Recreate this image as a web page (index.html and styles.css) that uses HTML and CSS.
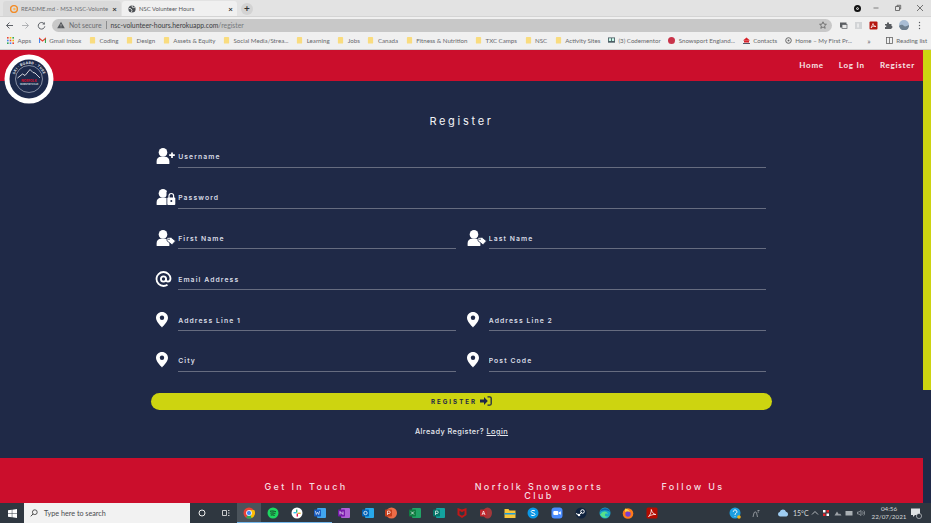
FILE: index.html
```html
<!DOCTYPE html>
<html lang="en">
<head>
<meta charset="utf-8">
<title>NSC Volunteer Hours</title>
<link rel="stylesheet" href="styles.css">
</head>
<body>
<svg class="defs" width="0" height="0">
  <defs>
    <g id="folder"><rect x="0" y="0" width="6" height="7.5" rx="1" fill="#f9dc7f"/></g>
    <g id="user"><circle cx="7" cy="4.4" r="4.3" fill="#fff"/><path d="M.6 15.4v-2.2c0-2.6 2-4.4 4.2-4.4h4.4c2.2 0 4.2 1.8 4.2 4.4v2.2c0 .3-.3.6-.6.6H1.2c-.3 0-.6-.3-.6-.6z" fill="#fff"/></g>
    <g id="pin"><path d="M6 0C2.7 0 0 2.6 0 5.8 0 9.600 4.300 13.600 6 15.400c1.700-1.800 6-5.800 6-9.600C12 2.600 9.300 0 6 0z" fill="#fff"/><circle cx="6" cy="5.800" r="2.200" fill="#1f2947"/></g>
  </defs>
</svg>

<header class="chrome">
  <div class="tabstrip">
    <div class="tab">
      <svg class="ico8" viewBox="0 0 8 8"><circle cx="4" cy="4" r="3.400" fill="none" stroke="#f28c28" stroke-width="1.500"/><circle cx="4.400" cy="4" r="1.200" fill="#f9b45a"/></svg>
      <span class="tab-title">README.md - MS3-NSC-Volunte</span><span class="tab-x">×</span>
    </div>
    <div class="tab tab-active">
      <svg class="ico8" viewBox="0 0 8 8"><circle cx="4" cy="4" r="3.600" fill="#4c4f53"/><path d="M1 3.400l2 .4 1 1.400-.6 2M4.400.6L4 2l1.600.6 1.400-.6" fill="none" stroke="#f1f1f1" stroke-width=".8"/></svg>
      <span class="tab-title">NSC Volunteer Hours</span><span class="tab-x">×</span>
    </div>
    <div class="newtab">+</div>
    <div class="spring"></div>
    <div class="profile-dot"></div>
    <div class="winctl">
      <svg class="ico8" viewBox="0 0 8 8"><path d="M1.500 4h5" stroke="#666" stroke-width=".8"/></svg>
      <svg class="ico8" viewBox="0 0 8 8"><path d="M1.500 2.500h4v4h-4zM3 2.500V1.300h3.700V5H5.500" fill="none" stroke="#555" stroke-width=".8"/></svg>
      <svg class="ico8" viewBox="0 0 8 8"><path d="M1 1l6 6M7 1l-6 6" stroke="#555" stroke-width=".8"/></svg>
    </div>
  </div>
  <div class="toolbar">
    <div class="nav-btns">
      <svg class="ico9" viewBox="0 0 9 9"><path d="M8 4.500H1.500M4.500 1.500l-3 3 3 3" fill="none" stroke="#5f6368" stroke-width="1"/></svg>
      <svg class="ico9" viewBox="0 0 9 9"><path d="M1 4.500h6.500M4.500 1.500l3 3-3 3" fill="none" stroke="#b0b2b5" stroke-width="1"/></svg>
      <svg class="ico9" viewBox="0 0 9 9"><path d="M7.300 3A3.300 3.300 0 1 0 7.800 5.300" fill="none" stroke="#5f6368" stroke-width="1"/><path d="M7.800 1v2.500H5.300z" fill="#5f6368"/></svg>
    </div>
    <div class="omnibox">
      <svg class="ico8" viewBox="0 0 8 8"><path d="M4 .8L7.800 7.300H.2z" fill="#55585c"/><path d="M4 3v2.300M4 5.800v.6" stroke="#ccc" stroke-width=".7"/></svg>
      <span class="notsecure">Not secure</span>
      <span class="omni-sep"></span>
      <span class="url">nsc-volunteer-hours.herokuapp.com<span class="url-path">/register</span></span>
      <span class="spring"></span>
      <svg class="ico8" viewBox="0 0 8 8"><path d="M4 .8l1 2.300 2.400.2-1.800 1.600.6 2.400L4 6 1.800 7.300l.6-2.400L.6 3.300 3 3.100z" fill="none" stroke="#555" stroke-width=".7"/></svg>
    </div>
    <div class="ext">
      <svg class="ico9" viewBox="0 0 9 9"><rect x="1" y="1.500" width="6.500" height="5" fill="#5a5d61"/><rect x="3" y="3.500" width="5" height="4" fill="#e8e8e8" stroke="#5a5d61" stroke-width=".7"/></svg>
      <svg class="ico9" viewBox="0 0 9 9"><rect x="1" y="1" width="7" height="7" fill="#d2d4d6"/><path d="M4 2.500v4" stroke="#fff"/></svg>
      <svg class="ico9" viewBox="0 0 9 9"><rect x=".5" y=".5" width="8" height="8" rx="1" fill="#b5160f"/><path d="M2 7l2-4.500L5 5l2 .5-3-.3z" fill="none" stroke="#fff" stroke-width=".7"/></svg>
      <svg class="ico9" viewBox="0 0 9 9"><path d="M1 3h2V1.500h2V3h2.500v2H8.300v2H7.500v1H1V6h1.200V4.500H1z" fill="#5a5d61"/></svg>
      <svg class="ico10" viewBox="0 0 10 10"><circle cx="5" cy="5" r="5" fill="#a9bdd4"/><path d="M0 6c2-2 4-1 5 0s3 0 5-1v1.500A5 5 0 0 1 .4 7z" fill="#6e7f8e"/></svg>
      <svg class="ico9" viewBox="0 0 9 9"><circle cx="4.500" cy="1.500" r=".7" fill="#5a5d61"/><circle cx="4.500" cy="4.500" r=".7" fill="#5a5d61"/><circle cx="4.500" cy="7.500" r=".7" fill="#5a5d61"/></svg>
    </div>
  </div>
  <div class="bookmarks">
    <span class="bm bm-apps"><svg class="ico7" viewBox="0 0 7 7"><g><rect width="1.600" height="1.600" fill="#ea4335"/><rect x="2.700" width="1.600" height="1.600" fill="#fbbc05"/><rect x="5.400" width="1.600" height="1.600" fill="#34a853"/><rect y="2.700" width="1.600" height="1.600" fill="#4285f4"/><rect x="2.700" y="2.700" width="1.600" height="1.600" fill="#ea4335"/><rect x="5.400" y="2.700" width="1.600" height="1.600" fill="#fbbc05"/><rect y="5.400" width="1.600" height="1.600" fill="#34a853"/><rect x="2.700" y="5.400" width="1.600" height="1.600" fill="#4285f4"/><rect x="5.400" y="5.400" width="1.600" height="1.600" fill="#ea4335"/></g></svg>Apps</span>
    <span class="bm"><svg class="ico7" viewBox="0 0 7 7"><path d="M.5 6V1.500L3.500 4l3-2.500V6" fill="none" stroke="#ea4335" stroke-width="1.100"/><path d="M.5 6V2" stroke="#4285f4" stroke-width="1.100"/><path d="M6.500 6V2" stroke="#34a853" stroke-width="1.100"/></svg>Gmail Inbox</span>
    <span class="bm"><svg class="ico7" viewBox="0 0 6 8"><use href="#folder"/></svg>Coding</span>
    <span class="bm"><svg class="ico7" viewBox="0 0 6 8"><use href="#folder"/></svg>Design</span>
    <span class="bm"><svg class="ico7" viewBox="0 0 6 8"><use href="#folder"/></svg>Assets &amp; Equity</span>
    <span class="bm"><svg class="ico7" viewBox="0 0 6 8"><use href="#folder"/></svg>Social Media/Strea...</span>
    <span class="bm"><svg class="ico7" viewBox="0 0 6 8"><use href="#folder"/></svg>Learning</span>
    <span class="bm"><svg class="ico7" viewBox="0 0 6 8"><use href="#folder"/></svg>Jobs</span>
    <span class="bm"><svg class="ico7" viewBox="0 0 6 8"><use href="#folder"/></svg>Canada</span>
    <span class="bm"><svg class="ico7" viewBox="0 0 6 8"><use href="#folder"/></svg>Fitness &amp; Nutrition</span>
    <span class="bm"><svg class="ico7" viewBox="0 0 6 8"><use href="#folder"/></svg>TXC Camps</span>
    <span class="bm"><svg class="ico7" viewBox="0 0 6 8"><use href="#folder"/></svg>NSC</span>
    <span class="bm"><svg class="ico7" viewBox="0 0 6 8"><use href="#folder"/></svg>Activity Sites</span>
    <span class="bm"><svg class="ico7" viewBox="0 0 8 7"><rect width="8" height="6" fill="#4d5f66"/><rect x="1" y="1" width="2.500" height="3" fill="#cfe"/><rect x="4.500" y="1" width="2.500" height="3" fill="#cfe"/></svg>(3) Codementor</span>
    <span class="bm"><svg class="ico7" viewBox="0 0 7 7"><circle cx="3.500" cy="3.500" r="3.500" fill="#c9344a"/></svg>Snowsport England...</span>
    <span class="bm"><svg class="ico7" viewBox="0 0 7 7"><path d="M3.500 .5L7 3.500H0z" fill="#d8232a"/><rect x="1" y="3.500" width="5" height="2" fill="#d8232a"/><rect y="6" width="7" height="1" fill="#556"/></svg>Contacts</span>
    <span class="bm"><svg class="ico7" viewBox="0 0 7 7"><circle cx="3.500" cy="3.500" r="2.800" fill="none" stroke="#666" stroke-width="1"/><circle cx="3.500" cy="3.500" r="1" fill="#666"/></svg>Home – My First Pr...</span>
    <span class="spring"></span>
    <span class="bm-more">»</span>
    <span class="bm-sep"></span>
    <span class="bm"><svg class="ico7" viewBox="0 0 7 7"><rect x=".5" y=".5" width="6" height="6" fill="none" stroke="#666" stroke-width=".8"/><path d="M3.500 .5v6" stroke="#666" stroke-width=".8"/></svg>Reading list</span>
  </div>
</header>

<div class="viewport">
  <div class="page">
    <nav class="topnav">
      <a class="navlink">Home</a>
      <a class="navlink">Log In</a>
      <a class="navlink">Register</a>
    </nav>
    <main class="content">
      <h1 class="title">Register</h1>
      <form class="form">
        <div class="field field-wide">
          <svg class="ficon" viewBox="0 0 20 16"><use href="#user"/><path d="M16 4.500v5.500M13.200 7.200h5.600" stroke="#fff" stroke-width="1.700"/></svg>
          <input class="finput" type="text" placeholder="Username">
        </div>
        <div class="field field-wide">
          <svg class="ficon" viewBox="0 0 20 16"><use href="#user"/><rect x="10.500" y="3" width="9.500" height="13" fill="#1f2947"/><rect x="11.300" y="8.500" width="8" height="7.500" rx=".9" fill="#fff"/><path d="M13 9V6.800a2.300 2.300 0 0 1 4.600 0V9" fill="none" stroke="#fff" stroke-width="1.200"/><circle cx="15.300" cy="12" r="1" fill="#1f2947"/></svg>
          <input class="finput" type="password" placeholder="Password">
        </div>
        <div class="field">
          <svg class="ficon" viewBox="0 0 20 16"><use href="#user"/><path d="M11 7.500l4-.2 4.500 3.700-3.500 3.800-5-4z" fill="#fff" stroke="#1f2947" stroke-width=".8"/><circle cx="13" cy="9.200" r=".7" fill="#1f2947"/></svg>
          <input class="finput" type="text" placeholder="First Name">
        </div>
        <div class="field">
          <svg class="ficon" viewBox="0 0 20 16"><use href="#user"/><path d="M11 7.500l4-.2 4.500 3.700-3.500 3.800-5-4z" fill="#fff" stroke="#1f2947" stroke-width=".8"/><circle cx="13" cy="9.200" r=".7" fill="#1f2947"/></svg>
          <input class="finput" type="text" placeholder="Last Name">
        </div>
        <div class="field field-wide">
          <svg class="ficon" viewBox="0 0 20 16"><path d="M10 8c0 1.500.7 2.600 1.900 2.600 1.700 0 2.600-1.500 2.600-3.300A7 7 0 0 0 7.500 1a7 7 0 1 0 0 14c1.600 0 3-.5 4-1.200" fill="none" stroke="#fff" stroke-width="1.800"/><circle cx="7.500" cy="8" r="2.600" fill="none" stroke="#fff" stroke-width="1.800"/></svg>
          <input class="finput" type="email" placeholder="Email Address">
        </div>
        <div class="field">
          <svg class="ficon" viewBox="0 0 20 16"><use href="#pin"/></svg>
          <input class="finput" type="text" placeholder="Address Line 1">
        </div>
        <div class="field">
          <svg class="ficon" viewBox="0 0 20 16"><use href="#pin"/></svg>
          <input class="finput" type="text" placeholder="Address Line 2">
        </div>
        <div class="field">
          <svg class="ficon" viewBox="0 0 20 16"><use href="#pin"/></svg>
          <input class="finput" type="text" placeholder="City">
        </div>
        <div class="field">
          <svg class="ficon" viewBox="0 0 20 16"><use href="#pin"/></svg>
          <input class="finput" type="text" placeholder="Post Code">
        </div>
        <button class="submit" type="button">Register
          <svg class="signin" viewBox="0 0 12 10"><path d="M0 3.500h4V1l3.800 4L4 9V6.500H0z" fill="#1f2947"/><path d="M7.500 .8h2.200c.8 0 1.500.7 1.500 1.500v5.400c0 .8-.7 1.500-1.500 1.500H7.500" fill="none" stroke="#1f2947" stroke-width="1.300"/></svg>
        </button>
      </form>
      <p class="already">Already Register? <a class="login">Login</a></p>
    </main>
    <footer class="footer">
      <h2 class="fhead">Get In Touch</h2>
      <h2 class="fhead fhead-mid">Norfolk Snowsports Club</h2>
      <h2 class="fhead">Follow Us</h2>
    </footer>
    <div class="logo">
      <svg viewBox="0 0 50 50" width="50" height="50">
        <circle cx="25" cy="25" r="24.500" fill="#fff"/>
        <circle cx="25" cy="25" r="19.500" fill="#1d2a4b"/>
        <circle cx="25" cy="25" r="13.500" fill="none" stroke="#cfd4de" stroke-width=".6"/>
        <path id="logoarc" d="M10 25a15 15 0 0 1 30 0" fill="none"/>
        <text class="logo-arc"><textPath href="#logoarc" startOffset="50%" text-anchor="middle">SKI · BOARD · TUBE</textPath></text>
        <path d="M13.500 24l5-4 2.500 1.500 5-6 3 3 2 .5 5 5" fill="none" stroke="#fff" stroke-width=".8"/>
        <text class="logo-name" x="25" y="27.500" text-anchor="middle">NORFOLK</text>
        <text class="logo-sub" x="25" y="31" text-anchor="middle">SNOWSPORTS CLUB</text>
      </svg>
    </div>
  </div>
  <div class="scrollbar"><div class="thumb"></div></div>
</div>

<footer class="taskbar">
  <span class="tb-start"><svg class="ico9" viewBox="0 0 9 9"><path d="M0 1.300L3.800.8v3.400H0zM4.300.7L9 0v4.200H4.300zM0 4.700h3.800v3.500L0 7.700zM4.300 4.700H9V9l-4.700-.7z" fill="#fff"/></svg></span>
  <div class="tb-search">
    <svg class="ico8" viewBox="0 0 8 8"><circle cx="4.800" cy="3.200" r="2.400" fill="none" stroke="#333" stroke-width=".8"/><path d="M3 5L.8 7.300" stroke="#333" stroke-width=".9"/></svg>
    <span>Type here to search</span>
  </div>
  <div class="tb-apps">
    <span class="tb-i"><svg class="ico8" viewBox="0 0 8 8"><circle cx="4" cy="4" r="3" fill="none" stroke="#eee" stroke-width="1"/></svg></span>
    <span class="tb-i"><svg class="ico8" viewBox="0 0 8 8"><path d="M.5 1.500h4v5h-4zM6 1.500h1.500M6 4h1.500M6 6.500h1.500" fill="none" stroke="#ddd" stroke-width=".9"/></svg></span>
    <span class="tb-i tb-on"><svg class="ico11" viewBox="0 0 12 12"><circle cx="6" cy="6" r="5.500" fill="#ea4335"/><path d="M6 6L11 9A5.500 5.500 0 0 1 3 10.700z" fill="#34a853"/><path d="M6 3h5.200A5.500 5.500 0 0 1 8.500 11z" fill="#fbbc05"/><circle cx="6" cy="6" r="2.600" fill="#4285f4" stroke="#fff" stroke-width=".8"/></svg></span>
    <span class="tb-i tb-run"><svg class="ico11" viewBox="0 0 12 12"><circle cx="6" cy="6" r="5.500" fill="#1ed760"/><path d="M3 4.300c2-.5 4-.4 6 .6M3.400 6.200c1.800-.4 3.400-.3 5 .5M3.700 8c1.400-.3 2.800-.2 4 .4" fill="none" stroke="#1a2a20" stroke-width=".9"/></svg></span>
    <span class="tb-i tb-run"><svg class="ico11" viewBox="0 0 12 12"><circle cx="6" cy="6" r="5.500" fill="#fff"/><rect x="2.500" y="5" width="3" height="1.400" fill="#36c5f0"/><rect x="5" y="2.500" width="1.400" height="3" fill="#2eb67d"/><rect x="6.600" y="5.600" width="3" height="1.400" fill="#ecb22e"/><rect x="5.600" y="6.600" width="1.400" height="3" fill="#e01e5a"/></svg></span>
    <span class="tb-i tb-run"><svg class="ico11" viewBox="0 0 12 12"><rect x="3" y="1" width="9" height="10" rx="1" fill="#41a5ee"/><rect y="2.500" width="7" height="7" rx=".8" fill="#185abd"/><path d="M1.300 4l1 3.500L3.500 5l1.200 2.500 1-3.500" fill="none" stroke="#fff" stroke-width=".6"/></svg></span>
    <span class="tb-i"><svg class="ico11" viewBox="0 0 12 12"><rect x="3" y="1" width="9" height="10" rx="1" fill="#b061d6"/><rect y="2.500" width="7" height="7" rx=".8" fill="#7719aa"/><path d="M2 7.500V4.500l3 3V4.500" fill="none" stroke="#fff" stroke-width=".7"/></svg></span>
    <span class="tb-i"><svg class="ico11" viewBox="0 0 12 12"><rect x="3" y="1" width="9" height="10" rx="1" fill="#28a8ea"/><rect y="2.500" width="7" height="7" rx=".8" fill="#0364b8"/><circle cx="3.500" cy="6" r="1.700" fill="none" stroke="#fff" stroke-width=".8"/></svg></span>
    <span class="tb-i"><svg class="ico11" viewBox="0 0 12 12"><circle cx="6.500" cy="6" r="5.500" fill="#ed6c47"/><rect y="2.500" width="7" height="7" rx=".8" fill="#c43e1c"/><path d="M2.500 8V4h1.500a1.200 1.200 0 0 1 0 2.500H2.500" fill="none" stroke="#fff" stroke-width=".7"/></svg></span>
    <span class="tb-i"><svg class="ico11" viewBox="0 0 12 12"><rect x="3" y="1" width="9" height="10" rx="1" fill="#21a366"/><rect y="2.500" width="7" height="7" rx=".8" fill="#107c41"/><path d="M2 4.500l3 3M5 4.500l-3 3" stroke="#fff" stroke-width=".7"/></svg></span>
    <span class="tb-i"><svg class="ico11" viewBox="0 0 12 12"><rect x="3" y="1" width="9" height="10" rx="1" fill="#13a3a0"/><rect y="2.500" width="7" height="7" rx=".8" fill="#077568"/><path d="M2.500 8V4h1.500a1.200 1.200 0 0 1 0 2.500H2.500" fill="none" stroke="#fff" stroke-width=".7"/></svg></span>
    <span class="tb-i"><svg class="ico11" viewBox="0 0 12 12"><path d="M1.500 1l4.500 1.500L10.500 1v7L6 11 1.500 8z" fill="#c01818"/><path d="M3.500 3.700v3.500l2.500 1.500 2.500-1.500V3.700L6 5.300z" fill="#2f3740"/></svg></span>
    <span class="tb-i"><svg class="ico11" viewBox="0 0 12 12"><ellipse cx="7.500" cy="6" rx="4.500" ry="5.500" fill="#a4373a"/><rect y="2.500" width="7" height="7" rx=".8" fill="#c0272d"/><path d="M2 8l1.500-4L5 8M2.600 6.700h1.800" fill="none" stroke="#fff" stroke-width=".7"/></svg></span>
    <span class="tb-i"><svg class="ico11" viewBox="0 0 12 12"><path d="M.5 2h4l1 1.500h6V11H.5z" fill="#f8c53a"/><rect x=".5" y="6" width="11" height="1.500" fill="#1d9bd8"/></svg></span>
    <span class="tb-i"><svg class="ico11" viewBox="0 0 12 12"><circle cx="6" cy="6" r="5.500" fill="#0a97e6"/><path d="M8 4c-.5-.8-3.800-1-3.800.6C4.200 6.300 8 5.600 8 7.400 8 9 4.600 8.800 3.900 7.800" fill="none" stroke="#fff" stroke-width="1"/></svg></span>
    <span class="tb-i"><svg class="ico11" viewBox="0 0 12 12"><rect x=".5" y=".5" width="11" height="11" rx="3" fill="#4a8cff"/><rect x="2.300" y="4" width="5" height="4" rx="1" fill="#fff"/><path d="M7.800 5.500l2-1.300v3.600l-2-1.300z" fill="#fff"/></svg></span>
    <span class="tb-i"><svg class="ico11" viewBox="0 0 12 12"><circle cx="6" cy="6" r="5.500" fill="#10233e"/><circle cx="7.500" cy="4.500" r="1.800" fill="none" stroke="#fff" stroke-width="1"/><circle cx="4" cy="8" r="1.300" fill="#fff"/><path d="M1 6.500L4 8l3-3" stroke="#fff" stroke-width="1" fill="none"/></svg></span>
    <span class="tb-i"><svg class="ico11" viewBox="0 0 12 12"><circle cx="6" cy="6" r="5.500" fill="#1ba6c8"/><path d="M2 7c.5-3 6.500-4 7 .5-1-1.500-3.500-1.500-3 1 .2 1 2 1.500 4 .8A5.500 5.500 0 0 1 1 7" fill="#58e08a"/><path d="M.7 5.500A5.500 5.500 0 0 1 11.500 6c-.5-3-9-4-10.800-.5z" fill="#0d5fa8"/></svg></span>
    <span class="tb-i"><svg class="ico11" viewBox="0 0 12 12"><circle cx="6" cy="6.500" r="5.300" fill="#ff7a1a"/><circle cx="6" cy="7" r="2.700" fill="#7b3fd1"/><path d="M3 1.500c2 .3 4 1 5 3.500-2-1-3.500-1-5 0z" fill="#ffd23f"/></svg></span>
    <span class="tb-i"><svg class="ico11" viewBox="0 0 12 12"><rect x=".5" y=".5" width="11" height="11" rx="1.500" fill="#b30b00"/><path d="M2.500 9.500c2-1.500 3-5 2.800-7 .5 2.500 2 4.500 4.500 5-2.500-.2-5 .5-7.300 2z" fill="none" stroke="#fff" stroke-width=".8"/></svg></span>
  </div>
  <span class="spring"></span>
  <div class="tray">
    <svg class="tray-help" viewBox="0 0 12 12"><circle cx="6" cy="6" r="5.500" fill="#1d9fe0"/><path d="M4.300 4.700a1.800 1.800 0 1 1 2.700 1.600c-.7.400-1 .8-1 1.500M6 9v.6" fill="none" stroke="#fff" stroke-width="1"/><circle cx="10" cy="10" r="1.800" fill="#f5b31a"/></svg>
    <svg class="tray-pen" viewBox="0 0 9 9"><path d="M1 8l1-4c.3-1.400 2.300-1.400 2.600 0L5.500 8M5.500 1.500h2M5.500 3h1.500" fill="none" stroke="#b8bcc0" stroke-width=".7"/></svg>
    <svg class="tray-cloud" viewBox="0 0 12 8"><path d="M3 7.500a2.300 2.300 0 0 1-.3-4.500A3.300 3.300 0 0 1 9 2.700a2.500 2.500 0 0 1 .5 4.800z" fill="#9fcdf2"/></svg>
    <span class="temp">15°C</span>
    <svg class="tray-s" viewBox="0 0 8 8"><path d="M1 5.500L4 2.500l3 3" fill="none" stroke="#d5d8da" stroke-width=".8"/></svg>
    <svg class="tray-s" viewBox="0 0 8 8"><rect x="1" y="1" width="2.500" height="2.500" fill="#fff"/><rect x="4.500" y="1" width="2.500" height="2.500" fill="#e8232a"/><rect x="1" y="4.500" width="2.500" height="2.500" fill="#e8232a"/><rect x="4.500" y="4.500" width="2.500" height="2.500" fill="#fff"/></svg>
    <svg class="tray-s" viewBox="0 0 8 8"><path d="M.5 6.500l2.500-4 2 3 1-1 1.500 2z" fill="#9ea3a8"/></svg>
    <svg class="tray-s" viewBox="0 0 8 8"><rect x=".5" y="2" width="7" height="4.500" fill="#aab0b4"/></svg>
    <svg class="tray-s" viewBox="0 0 8 8"><path d="M.5 3h1.500l2-1.500v5L2 5H.5zM5.500 2.500c.8.800.8 2.200 0 3M6.700 1.500c1.300 1.300 1.300 3.700 0 5" fill="none" stroke="#aab0b4" stroke-width=".7"/></svg>
    <div class="clock"><span>04:56</span><span>22/07/2021</span></div>
    <span class="notify"><svg class="ico11" viewBox="0 0 12 12"><path d="M1 1.500h9V8H5L3 10V8H1z" fill="#dfe2e4"/><circle cx="9" cy="9" r="2.600" fill="#2f3740" stroke="#dfe2e4" stroke-width=".6"/></svg></span>
  </div>
</footer>
</body>
</html>
```

FILE: styles.css
```css
* { box-sizing: border-box; }
html, body { margin: 0; padding: 0; width: 100%; height: 100%; overflow: hidden; }
body { display: flex; flex-direction: column; font-family: Lato, "Liberation Sans", sans-serif; background: #1f2947; }
.defs { position: absolute; }
.spring { flex: 1; }
.ico7 { width: 7px; height: 7px; flex: none; }
.ico8 { width: 8px; height: 8px; flex: none; }
.ico9 { width: 9px; height: 9px; flex: none; }
.ico10 { width: 10px; height: 10px; flex: none; }
.ico11 { width: 12px; height: 12px; flex: none; }

/* Browser chrome */
.chrome { flex: none; height: 50px; background: #f0f0f0; color: #5c5e62; }
.tabstrip { height: 17px; background: #e3e3e3; display: flex; align-items: flex-end; padding-left: 3px; border-bottom: 1px solid #d4d4d4; }
.tab { width: 118px; height: 15px; display: flex; align-items: center; gap: 3px; padding: 0 4px 0 7px; font-size: 5.9px; color: #6c6e72; background: #dadada; border-radius: 3px 3px 0 0; white-space: nowrap; }
.tab-active { width: 115px; background: #f0f0f0; color: #55575b; margin-left: 1px; padding-left: 6px; }
.tab-title { flex: 1; overflow: hidden; }
.tab-x { font-size: 8px; color: #333; font-weight: 700; }
.newtab { width: 12px; height: 12px; margin: 0 0 1px 4px; border-radius: 50%; background: #d3d3d3; text-align: center; font-size: 10px; line-height: 11px; font-weight: 700; color: #333; }
.profile-dot { width: 7px; height: 7px; border-radius: 50%; background: #111; border: 2px solid #111; margin: 0 11px 4px 0; box-shadow: inset 0 0 0 1px #ddd; }
.winctl { display: flex; gap: 14px; padding: 0 7px 0 0; margin-bottom: 4px; }
.toolbar { height: 16px; display: flex; align-items: center; padding: 0 5px; }
.nav-btns { display: flex; gap: 7px; width: 47px; }
.omnibox { width: 780px; height: 13px; background: #c8c8c8; border-radius: 7px; display: flex; align-items: center; padding: 0 5px; font-size: 6.8px; }
.notsecure { margin-left: 4px; color: #6a6c70; }
.omni-sep { width: 1px; height: 8px; background: #8a8c8e; margin: 0 4px; }
.url { color: #3c3e42; }
.url-path { color: #77797c; }
.ext { display: flex; align-items: center; gap: 6px; margin-left: 7px; }
.bookmarks { height: 17px; display: flex; align-items: center; padding: 0 9px 1px 7px; gap: 7.6px; font-size: 6.15px; border-bottom: 1px solid #cfcfcf; white-space: nowrap; color: #66686c; }
.bm { display: inline-flex; align-items: center; gap: 3.5px; }
.bm-more { font-size: 8px; }
.bm-sep { width: 1px; height: 9px; background: #c8c8c8; }

/* Page */
.viewport { flex: 1; min-height: 0; display: flex; background: #1f2947; }
.page { position: relative; flex: 1; display: flex; flex-direction: column; min-width: 0; }
.scrollbar { width: 8px; flex: none; background: #1f2947; }
.thumb { height: 340px; background: #cdd410; }
.topnav { flex: none; height: 31px; background: #cb0e2c; display: flex; justify-content: flex-end; align-items: center; gap: 15px; padding: 0 8px 1px 0; }
.navlink { color: #f6e6e8; font-size: 8px; font-weight: 700; letter-spacing: .75px; font-family: Lato, sans-serif; }
.content { flex: 1; min-height: 0; padding-top: 33px; color: #fff; }
.title { margin: 0; text-align: center; font: 400 11px/14px Inter, sans-serif; letter-spacing: 2.7px; color: #f2f3f6; }
.form { width: 621px; margin: 19px 0 0 151px; display: grid; grid-template-columns: 1fr 1fr; row-gap: 20px; }
.field { display: flex; align-items: center; padding: 0 5.6px 0 5px; height: 20.8px; }
.field-wide { grid-column: 1 / -1; }
.ficon { width: 20px; height: 16px; flex: none; margin-right: 2.2px; margin-top: -2px; overflow: visible; }
.finput { flex: 1; min-width: 0; height: 20.8px; background: none; border: 0; border-bottom: 1px solid #666c80; padding: 0; outline: 0; color: #fff; font: 600 6.8px Inter, sans-serif; letter-spacing: 1.1px; }
.finput::placeholder { color: #d9dce5; opacity: 1; }
.submit { grid-column: 1 / -1; margin-top: 1px; height: 17px; border: 0; border-radius: 9px; background: #cdd410; color: #1f2947; font: 700 6.2px Inter, sans-serif; letter-spacing: 2px; text-transform: uppercase; display: flex; align-items: center; justify-content: center; gap: 3px; padding: 1px 0 0; }
.signin { width: 12px; height: 10px; margin-top: -2px; }
.already { margin: 17px 0 0; text-align: center; font: 500 7.3px/10px Inter, sans-serif; letter-spacing: .45px; color: #e6e8ee; }
.login { text-decoration: underline; }
.footer { flex: none; height: 45px; background: #cb0e2c; display: grid; grid-template-columns: 242px 224px 84px; padding: 23.5px 0 0 185px; overflow: hidden; }
.fhead { margin: 0; text-align: center; font: 500 9px/9px Inter, sans-serif; letter-spacing: 2.4px; color: #f5dfe3; }
.fhead-mid { width: 150px; justify-self: center; }
.logo { position: absolute; left: 4px; top: 4px; width: 50px; height: 50px; }
.logo-arc { font: 700 3.4px Inter, sans-serif; fill: #e7eaf0; letter-spacing: .3px; }
.logo-name { font: 800 3.2px Inter, sans-serif; fill: #cb0e2c; }
.logo-sub { font: 600 1.8px Inter, sans-serif; fill: #dfe2ea; }

/* Taskbar */
.taskbar { flex: none; height: 20px; background: #2f3740; display: flex; align-items: center; }
.tb-start { width: 24px; display: flex; justify-content: center; }
.tb-search { width: 166px; height: 20px; background: #f2f2f2; display: flex; align-items: center; gap: 6px; padding-left: 6px; font-size: 7.2px; color: #4a4c50; }
.tb-apps { display: flex; }
.tb-i { width: 23.7px; height: 20px; display: flex; align-items: center; justify-content: center; border-bottom: 1px solid transparent; }
.tb-on { background: #4b535b; border-bottom-color: #76b9ed; }
.tb-run { border-bottom-color: #76b9ed; }
.tray { display: flex; align-items: center; font-size: 6.3px; color: #d5d8da; height: 20px; }
.tray svg { flex: none; }
.tray-help { width: 12px; height: 12px; margin-right: 11px; }
.tray-pen { width: 9px; height: 9px; margin-right: 16.5px; }
.tray-cloud { width: 12px; height: 8px; margin-right: 4px; }
.temp { margin-right: 3.5px; font-size: 7px; width: 14px; }
.tray-s { width: 8px; height: 8px; margin-right: 3.5px; }
.clock { display: flex; flex-direction: column; align-items: center; width: 30px; line-height: 8px; margin-left: 6px; }
.notify { width: 27px; display: flex; justify-content: center; padding-right: 3px; }
```
